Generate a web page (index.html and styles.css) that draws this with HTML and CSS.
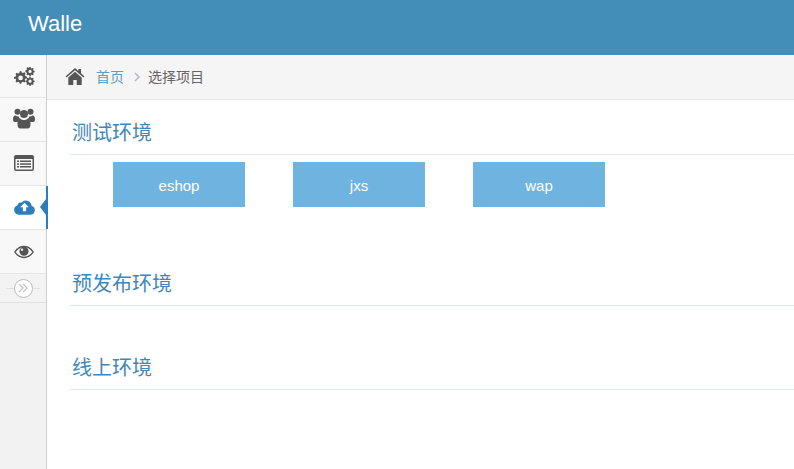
FILE: index.html
```html
<!DOCTYPE html>
<html lang="en">
<head>
    <meta charset="UTF-8">
    <meta name="viewport" content="width=device-width, initial-scale=1.0">
    <title>Walle</title>
    <link rel="stylesheet" href="styles.css">
</head>
<body>

<div class="navbar">
    <a class="brand">Walle</a>
</div>

<div class="layout">
    <div class="sidebar">
        <a class="nav-item">
            <svg class="icon" width="21" height="19" viewBox="0 0 22 20">
                <g fill="#555">
                    <path fill-rule="evenodd" d="M6 4.500l1.600-.3.5 1.600 1.300.6 1.500-.8 1.200 1.200-.8 1.500.5 1.300 1.700.5v1.700l-1.700.5-.5 1.300.8 1.500-1.200 1.200-1.500-.8-1.300.5-.5 1.700H6l-.5-1.700-1.300-.5-1.500.8-1.200-1.200.8-1.500-.6-1.300L0 12.300v-1.700l1.700-.5.6-1.300-.8-1.500 1.200-1.200 1.500.8 1.300-.6zM6.900 9a2.500 2.500 0 1 0 0 5 2.500 2.500 0 0 0 0-5z"/>
                    <path fill-rule="evenodd" d="M16.200 0h1.300l.3 1.200.9.4 1.100-.6.9.9-.6 1.100.4.9 1.200.3v1.300l-1.200.3-.4.9.6 1.100-.9.9-1.100-.6-.9.4-.3 1.200h-1.300l-.3-1.200-.9-.4-1.100.6-.9-.9.6-1.100-.4-.9-1.200-.3V3.500l1.200-.3.4-.9-.6-1.100.9-.9 1.100.6.9-.4zM16.850 3a1.700 1.700 0 1 0 0 3.400 1.700 1.700 0 0 0 0-3.400z"/>
                    <path fill-rule="evenodd" d="M16.200 10.200h1.300l.3 1.200.9.4 1.100-.6.9.9-.6 1.100.4.9 1.200.3v1.300l-1.200.3-.4.9.6 1.100-.9.9-1.100-.6-.9.4-.3 1.200h-1.300l-.3-1.200-.9-.4-1.100.6-.9-.9.6-1.100-.4-.9-1.200-.3v-1.300l1.200-.3.4-.9-.6-1.100.9-.9 1.100.6.9-.4zM16.850 13.200a1.700 1.700 0 1 0 0 3.400 1.700 1.700 0 0 0 0-3.400z"/>
                </g>
            </svg>
        </a>
        <a class="nav-item nudge-up">
            <svg class="icon" width="22" height="21" viewBox="0 0 22 20">
                <g fill="#555">
                    <circle cx="4.500" cy="3.200" r="3"/>
                    <circle cx="17.500" cy="3.200" r="3"/>
                    <circle cx="11" cy="5.500" r="4"/>
                    <path d="M0 10.500c0-2.500 1.200-3.500 2.500-3.500 1 .8 2 1 3 .8.300 1 .8 1.800 1.500 2.400-1.200.5-2 1.600-2.300 3.300H1.500C.5 13.500 0 12.500 0 10.500z"/>
                    <path d="M22 10.500c0-2.500-1.200-3.500-2.500-3.500-1 .8-2 1-3 .8-.3 1-.8 1.800-1.500 2.400 1.200.5 2 1.600 2.300 3.300h3.200c1 0 1.500-1 1.500-3z"/>
                    <path d="M7.300 10c1 1 2.300 1.500 3.700 1.500s2.700-.5 3.700-1.500c1.800.2 2.800 1.800 2.800 5.500 0 3-1 4.500-3 4.500h-7c-2 0-3-1.500-3-4.500 0-3.700 1-5.300 2.800-5.500z"/>
                </g>
            </svg>
        </a>
        <a class="nav-item nudge-up">
            <svg class="icon" width="20" height="16" viewBox="0 0 20 16">
                <rect width="20" height="16" rx="2" fill="#555"/>
                <rect x="1.500" y="4" width="17" height="10.500" fill="#f8f8f8"/>
                <g fill="#555">
                    <rect x="3" y="5.500" width="2" height="1.500"/>
                    <rect x="3" y="8.300" width="2" height="1.500"/>
                    <rect x="3" y="11" width="2" height="1.500"/>
                    <rect x="6" y="5.500" width="11" height="1.500"/>
                    <rect x="6" y="8.300" width="11" height="1.500"/>
                    <rect x="6" y="11" width="11" height="1.500"/>
                </g>
            </svg>
        </a>
        <a class="nav-item nudge-up active">
            <svg class="icon" width="21" height="16" viewBox="0 0 22 16">
                <path fill="#2b7dbc" d="M5 16a5 5 0 0 1-1.500-9.700A4 4 0 0 1 8 3.300 6 6 0 0 1 18.500 7 4.600 4.600 0 0 1 17.500 16z"/>
                <path fill="#fff" d="M11 3.500l4.500 4.700h-2.800V12.500h-3.400V8.200H6.500z"/>
            </svg>
        </a>
        <a class="nav-item">
            <svg class="icon" width="20" height="14" viewBox="0 0 22 14">
                <path fill="none" stroke="#555" stroke-width="1.500" d="M1 7C3.500 3 7 1 11 1s7.500 2 10 6c-2.500 4-6 6-10 6S3.500 11 1 7z"/>
                <circle cx="11" cy="6.200" r="5" fill="#555"/>
                <circle cx="8.800" cy="4.400" r="1.300" fill="#f8f8f8"/>
            </svg>
        </a>
        <div class="collapse-bar">
            <span class="collapse-btn">
                <svg width="10" height="10" viewBox="0 0 10 10">
                    <path fill="none" stroke="#c4c4c4" stroke-width="1.300" d="M1 1l4 4-4 4M5 1l4 4-4 4"/>
                </svg>
            </span>
        </div>
    </div>

    <div class="main">
        <div class="breadcrumbs">
            <svg class="home-icon" width="20" height="17" viewBox="0 0 19 17">
                <path fill="#555" d="M9.500 0l3.300 2.900V1h2.700v4.300L19 8.400l-1 1.100-8.500-7.300L1 9.500 0 8.400z"/>
                <path fill="#555" d="M9.500 3.700l6.700 5.800V17h-5v-5H7.800v5h-5V9.500z"/>
            </svg>
            <a class="crumb-link">首页</a>
            <svg class="crumb-sep" width="6" height="10" viewBox="0 0 6 10">
                <path fill="none" stroke="#b2b6bf" stroke-width="1.500" d="M1 1l4 4-4 4"/>
            </svg>
            <span class="crumb-current">选择项目</span>
        </div>

        <div class="content">
            <div class="section">
                <h4 class="section-title">测试环境</h4>
                <div class="projects">
                    <a class="project">eshop</a>
                    <a class="project">jxs</a>
                    <a class="project">wap</a>
                </div>
            </div>
            <div class="section empty">
                <h4 class="section-title">预发布环境</h4>
            </div>
            <div class="section empty">
                <h4 class="section-title">线上环境</h4>
            </div>
        </div>
    </div>
</div>

</body>
</html>
```

FILE: styles.css
```css
* {
    box-sizing: border-box;
}
html, body {
    height: 100%;
}
body {
    margin: 0;
    font-family: "Open Sans", "Liberation Sans", "Noto Sans CJK SC", sans-serif;
    font-size: 14px;
    color: #393939;
    background-color: #fff;
    display: flex;
    flex-direction: column;
    overflow: hidden;
}
.navbar {
    height: 55px;
    flex-shrink: 0;
    padding: 11px 0 0 28px;
    background-color: #438eb9;
}
.brand {
    font-family: "Liberation Sans", Arial, sans-serif;
    font-size: 22px;
    line-height: 26px;
    color: #fff;
}
.layout {
    flex: 1;
    display: flex;
}
.sidebar {
    width: 47px;
    flex-shrink: 0;
    background-color: #f2f2f2;
    border-right: 1px solid #ccc;
}
.nav-item {
    position: relative;
    height: 44px;
    display: flex;
    align-items: center;
    justify-content: center;
    padding-left: 2px;
    background-color: #f8f8f8;
    border-bottom: 1px solid #e5e5e5;
}
.nav-item:first-child {
    height: 43px;
}
.nav-item.nudge-up {
    padding-bottom: 2px;
}
.nav-item.active {
    background-color: #fff;
}
.nav-item.active::before {
    content: "";
    position: absolute;
    top: 0;
    right: -2px;
    bottom: 0;
    width: 2px;
    background-color: #2b7dbc;
}
.nav-item.active::after {
    content: "";
    position: absolute;
    top: 13px;
    right: 0;
    border-top: 8px solid transparent;
    border-bottom: 8px solid transparent;
    border-right: 6px solid #2b7dbc;
}
.collapse-bar {
    position: relative;
    height: 29px;
    display: flex;
    align-items: center;
    justify-content: center;
    background-color: #f3f3f3;
    border-bottom: 1px solid #e0e0e0;
}
.collapse-bar::before {
    content: "";
    position: absolute;
    left: 6px;
    right: 6px;
    top: 14px;
    border-top: 1px solid #e0e0e0;
}
.collapse-btn {
    position: relative;
    width: 19px;
    height: 19px;
    display: flex;
    align-items: center;
    justify-content: center;
    background-color: #fff;
    border: 1px solid #bbb;
    border-radius: 50%;
}
.main {
    flex: 1;
    min-width: 0;
}
.breadcrumbs {
    height: 45px;
    display: flex;
    align-items: center;
    padding: 0 0 2px 18px;
    background-color: #f5f5f5;
    border-bottom: 1px solid #e5e5e5;
}
.home-icon {
    margin-right: 11px;
}
.crumb-link {
    color: #5f9ac2;
}
.crumb-sep {
    margin: 1px 8px 0 10px;
}
.crumb-current {
    color: #666;
}
.content {
    padding: 0 0 0 23px;
}
.section-title {
    margin: 0;
    height: 55px;
    padding: 20px 0 0 2px;
    font-size: 20px;
    line-height: 26px;
    font-weight: normal;
    color: #3f87ba;
    border-bottom: 1px solid #dce8f1;
}
.projects {
    display: flex;
    gap: 48px;
    padding: 7px 0 0 43px;
    height: 96px;
}
.project {
    width: 132px;
    height: 45px;
    display: flex;
    align-items: center;
    justify-content: center;
    padding-top: 1px;
    font-family: "Liberation Sans", Arial, sans-serif;
    font-size: 15px;
    color: #fff;
    background-color: #6fb3e0;
}
.section.empty + .section.empty {
    margin-top: 29px;
}
```
